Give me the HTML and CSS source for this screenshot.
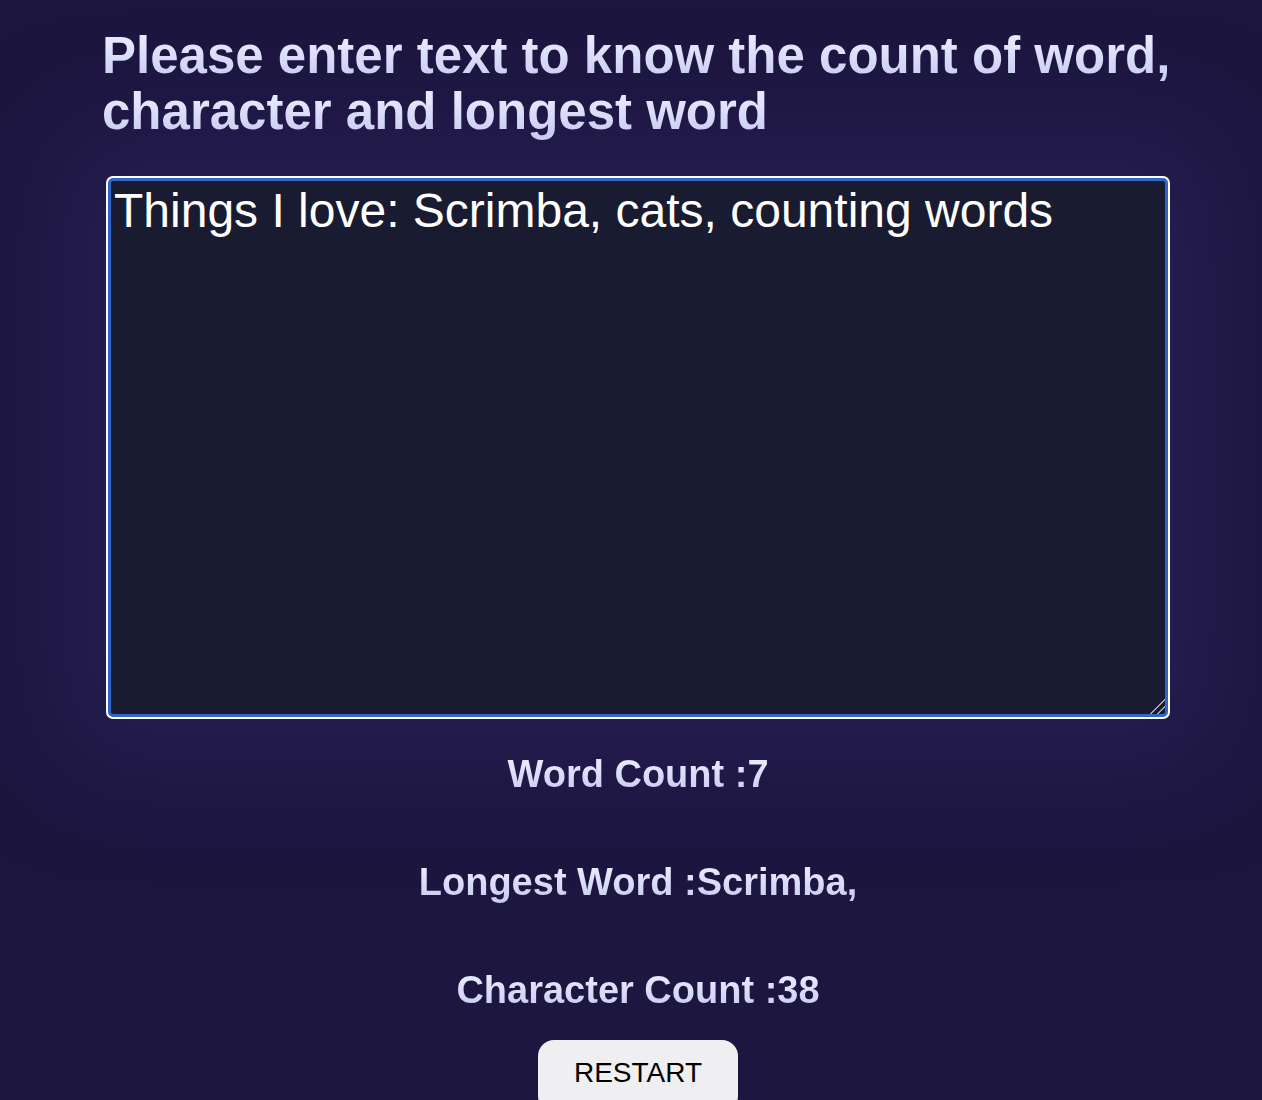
FILE: index.html
```html
<!DOCTYPE html>
<html lang="en">
<head>
<meta charset="utf-8">
<title>Word Counter</title>
<link rel="stylesheet" href="styles.css">
</head>
<body>
<main class="app">
  <h1 class="title">Please enter text to know the count of word, character and longest word</h1>
  <div class="field">
    <textarea class="input" spellcheck="false">Things I love: Scrimba, cats, counting words</textarea>
  </div>
  <section class="stats">
    <h2 class="stat">Word Count :7</h2>
    <h2 class="stat">Longest Word :Scrimba,</h2>
    <h2 class="stat">Character Count :38</h2>
  </section>
  <div class="actions">
    <button class="restart" type="button">RESTART</button>
  </div>
</main>
</body>
</html>
```

FILE: styles.css
```css
html, body {
  margin: 0;
  padding: 0;
}
body {
  background: #1d1640;
  font-family: "Liberation Sans", Arial, sans-serif;
  min-height: 1100px;
  overflow: hidden;
}
.app {
  width: 1090px;
  margin: 0 0 0 102px;
  padding-top: 28px;
  display: flex;
  flex-direction: column;
}
.title {
  isolation: isolate;
  margin: 0;
  font-size: 51px;
  line-height: 56px;
  font-weight: 700;
  background: linear-gradient(180deg, #e6e8ff 25%, #cbcef0 85%) 0 0 / 100% 56px repeat-y;
  -webkit-background-clip: text;
  background-clip: text;
  color: transparent;
  -webkit-text-fill-color: transparent;
}
.field {
  width: 1060px;
  height: 539px;
  margin: 38px 0 0 6px;
  border-radius: 5px;
  box-shadow: 0 0 110px 40px rgba(44, 36, 92, 0.65);
}
.input {
  display: block;
  box-sizing: border-box;
  width: 100%;
  height: 100%;
  margin: 0;
  padding: 2px 3px;
  border: 3px solid #3066c8;
  border-radius: 5px;
  background: #191b30;
  color: #ffffff;
  font-family: "Liberation Sans", Arial, sans-serif;
  font-size: 48px;
  line-height: 56px;
  outline: none;
  box-shadow: 0 0 0 2px #ffffff;
  resize: vertical;
}
.input::-webkit-resizer {
  background: linear-gradient(135deg,
    transparent 0 48%, #a4a4b0 48% 56%, transparent 56% 72%,
    #a4a4b0 72% 80%, transparent 80%);
}
.stats {
  display: flex;
  flex-direction: column;
  align-items: center;
  width: 1072px;
  margin-top: 35px;
}
.stat {
  isolation: isolate;
  margin: 0 0 64px;
  font-size: 38px;
  line-height: 44px;
  font-weight: 700;
  background: linear-gradient(180deg, #e6e8ff 25%, #cbcef0 85%);
  -webkit-background-clip: text;
  background-clip: text;
  color: transparent;
  -webkit-text-fill-color: transparent;
}
.stat:last-child {
  margin-bottom: 0;
}
.actions {
  display: flex;
  justify-content: center;
  width: 1072px;
  margin-top: 28px;
}
.restart {
  width: 200px;
  height: 72px;
  border: none;
  border-radius: 16px;
  background: #efeff1;
  color: #000;
  font-family: "Liberation Sans", Arial, sans-serif;
  font-size: 28px;
  padding: 0 0 6px;
}
```
